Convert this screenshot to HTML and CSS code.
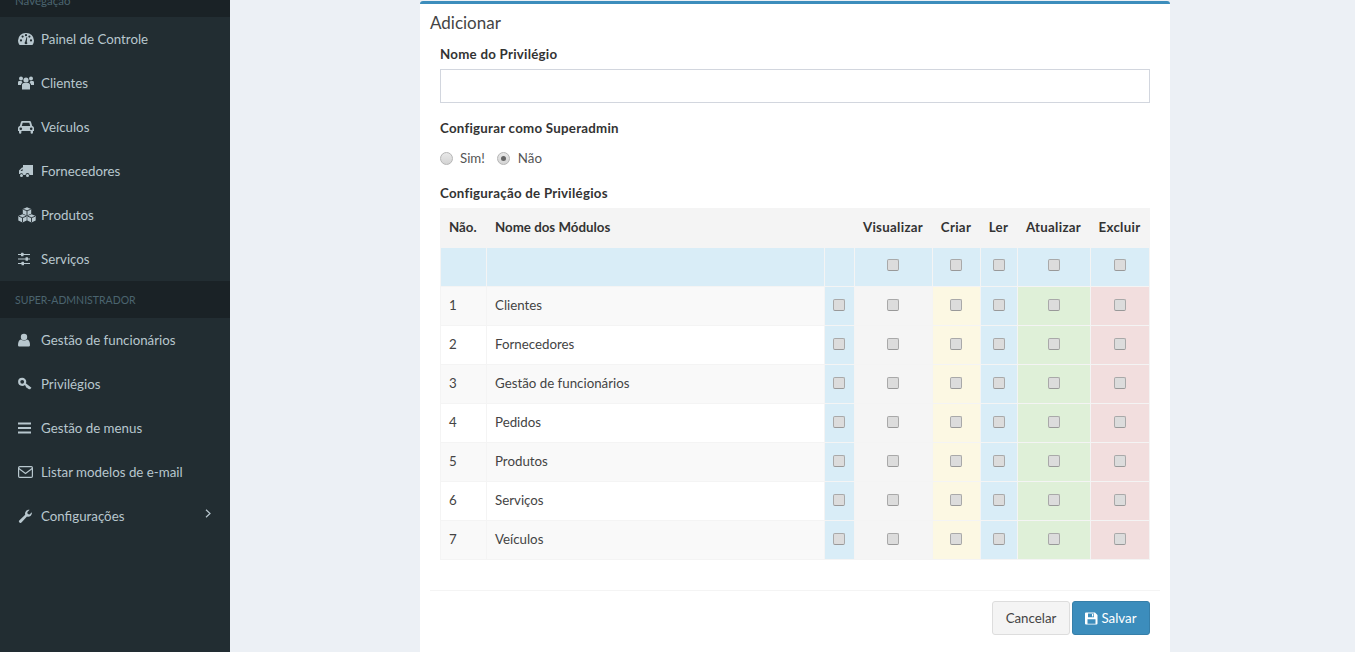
FILE: index.html
```html
<!DOCTYPE html>
<html lang="pt-BR">
<head>
  <meta charset="UTF-8">
  <meta name="viewport" content="width=device-width, initial-scale=1.0">
  <title>Adicionar Privilégio</title>
  <link rel="stylesheet" href="styles.css">
</head>
<body>
  <div class="wrapper">
    <aside class="sidebar">
      <div class="side-header side-header-top"><span>Navegação</span></div>
      <a class="side-item"><span class="side-icon"><svg width="16" height="14" viewBox="0 0 16 14"><path fill-rule="evenodd" d="M8 1a7.600 7.600 0 0 0-8 7.600c0 1.500.4 2.800 1.100 4a1 1 0 0 0 .9.4h12a1 1 0 0 0 .9-.4c.7-1.200 1.100-2.500 1.100-4A7.600 7.600 0 0 0 8 1zM3 9.500a1.100 1.100 0 1 1 0-2.200 1.100 1.100 0 0 1 0 2.200zM4.600 5.700a1.100 1.100 0 1 1 0-2.200 1.100 1.100 0 0 1 0 2.200zM8 4.300a1.100 1.100 0 1 1 0-2.200 1.100 1.100 0 0 1 0 2.200zM13 9.500a1.100 1.100 0 1 1 0-2.200 1.100 1.100 0 0 1 0 2.200zM11.400 5.700a1.100 1.100 0 1 1 0-2.200 1.100 1.100 0 0 1 0 2.200zM9.300 11.500a1.500 1.500 0 0 1-2.600 0c-.3-.6-.1-1.200.4-1.600L8.600 5l.6.200-.4 5c.5.300.8.800.5 1.300z"/></svg></span>Painel de Controle</a>
      <a class="side-item"><span class="side-icon"><svg width="16" height="14" viewBox="0 0 16 14"><circle cx="3" cy="2.500" r="2"/><circle cx="13" cy="2.500" r="2"/><circle cx="8" cy="4" r="2.600"/><path d="M0 9V6.500C0 5.700.5 5 1.200 5h2.300c.3.600.6 1 1 1.400C3.500 7 3 8 3 9H0zM16 9V6.500c0-.8-.5-1.500-1.200-1.500h-2.300c-.3.600-.6 1-1 1.400 1 .6 1.500 1.600 1.500 2.600h3zM4 13.500V9c0-1 .7-2 1.700-2h4.600c1 0 1.700 1 1.700 2v4.500z"/></svg></span>Clientes</a>
      <a class="side-item"><span class="side-icon"><svg width="16" height="14" viewBox="0 0 16 14"><path fill-rule="evenodd" d="M4.500 1h7c.8 0 1.400.5 1.600 1.200L14.200 6c1 .3 1.800 1.100 1.800 2.200v2.800h-1v1.500a1.200 1.200 0 0 1-2.400 0V11H3.400v1.500a1.200 1.200 0 0 1-2.400 0V11H0V8.200C0 7.100.8 6.300 1.800 6l1.100-3.800C3.100 1.500 3.700 1 4.500 1zM4.700 2.800 3.800 6h8.400l-.9-3.200zM2.800 7.400a1.300 1.300 0 1 0 0 2.600 1.300 1.300 0 0 0 0-2.600zM13.200 7.400a1.300 1.300 0 1 0 0 2.600 1.300 1.300 0 0 0 0-2.600z"/></svg></span>Veículos</a>
      <a class="side-item"><span class="side-icon"><svg width="16" height="14" viewBox="0 0 16 14"><path fill-rule="evenodd" d="M5 1h10v10h-3.500a2 2 0 0 0-4 0H5.300a2 2 0 0 0-3.600-1H1V6.500L4 3.500H5zM4.500 4.800 2.500 7h2z"/><circle cx="3.500" cy="11.500" r="1.500"/><circle cx="9.500" cy="11.500" r="1.500"/></svg></span>Fornecedores</a>
      <a class="side-item"><span class="side-icon"><svg class="side-cubes" width="18" height="16" viewBox="0 0 18 16"><path d="M9 .3l4.200 1.700v4.700L9 8.600 4.800 6.700V2zM4.500 7.200l4.200 1.700v4.700l-4.200 1.900L.3 13.600V8.900zM13.500 7.200l4.200 1.700v4.700l-4.200 1.900-4.200-1.900V8.900z"/><path class="cube-line" d="M5.200 2.300 9 3.800l3.800-1.500M9 3.800v4.600M.7 9.200l3.800 1.500 3.800-1.500M4.500 10.700v4.600M9.700 9.200l3.800 1.500 3.800-1.500M13.500 10.700v4.600"/></svg></span>Produtos</a>
      <a class="side-item"><span class="side-icon"><svg width="13" height="14" viewBox="0 0 13 14"><path d="M0 2h12v1H0zM0 6.500h12v1H0zM0 11h12v1H0z"/><rect x="3" y=".7" width="2.500" height="3.500" rx=".5"/><rect x="7.500" y="5.200" width="2.500" height="3.500" rx=".5"/><rect x="3.500" y="9.700" width="2.500" height="3.500" rx=".5"/></svg></span>Serviços</a>
      <div class="side-header"><span>SUPER-ADMNISTRADOR</span></div>
      <a class="side-item"><span class="side-icon"><svg width="12" height="14" viewBox="0 0 12 14"><circle cx="6" cy="4" r="3.200"/><path d="M0 12c0-3 1-5.200 3-5.600C3.800 7 4.800 7.500 6 7.500S8.200 7 9 6.400c2 .4 3 2.600 3 5.600 0 1-.7 1.500-1.500 1.500h-9C.7 13.500 0 13 0 12z"/></svg></span>Gestão de funcionários</a>
      <a class="side-item"><span class="side-icon"><svg class="side-key" width="14" height="14" viewBox="0 0 14 14"><circle cx="4.200" cy="4.800" r="3"/><path d="M6.500 6.700 12.800 11.500M9.600 9 8.400 10.500M11.400 10.400 10.400 11.900"/></svg></span>Privilégios</a>
      <a class="side-item"><span class="side-icon"><svg width="13" height="12" viewBox="0 0 13 12"><path d="M0 .5h13v2H0zM0 5h13v2H0zM0 9.500h13v2H0z"/></svg></span>Gestão de menus</a>
      <a class="side-item"><span class="side-icon"><svg class="side-outline" width="15" height="12" viewBox="0 0 15 12"><rect x=".6" y=".6" width="13.800" height="10.800" rx="1.200"/><path d="M.8 2.500 7.500 7.500 14.200 2.500"/></svg></span>Listar modelos de e-mail</a>
      <a class="side-item"><span class="side-icon"><svg width="14" height="14" viewBox="0 0 14 14"><path d="M13.800 3.200c.3 1.400-.2 2.800-1.300 3.700-1 .8-2.300 1-3.500.6l-5.300 5.700a1.500 1.500 0 1 1-2.200-2l5.700-5.400C6.800 4.600 7 3.300 7.900 2.200 8.800 1 10.200.5 11.600.8L9.300 3.200l.4 1.800 1.800.5z"/></svg></span>Configurações<svg class="side-arrow" width="7" height="9" viewBox="0 0 7 9"><path d="M1 .8 5 4.500 1 8.200"/></svg></a>
    </aside>

    <main class="content">
      <section class="box">
        <h3 class="box-title">Adicionar</h3>
        <div class="box-body">
          <label class="field-label" for="privilegeName">Nome do Privilégio</label>
          <input class="form-control" type="text" id="privilegeName">

          <div class="field-label label-super">Configurar como Superadmin</div>
          <div class="radio-row">
            <span class="radio-fake"></span><span class="radio-text">Sim!</span>
            <span class="radio-fake checked"></span><span class="radio-text">Não</span>
          </div>

          <div class="field-label label-config">Configuração de Privilégios</div>
          <table class="priv-table">
            <colgroup>
              <col class="col-no"><col class="col-name"><col class="col-all"><col class="col-view"><col class="col-create"><col class="col-read"><col class="col-update"><col class="col-delete">
            </colgroup>
            <thead>
              <tr><th>Não.</th><th>Nome dos Módulos</th><th></th><th>Visualizar</th><th>Criar</th><th>Ler</th><th>Atualizar</th><th>Excluir</th></tr>
            </thead>
            <tbody>
              <tr class="all-row"><td></td><td></td><td></td><td class="chk"><span class="check"></span></td><td class="chk"><span class="check"></span></td><td class="chk"><span class="check"></span></td><td class="chk"><span class="check"></span></td><td class="chk"><span class="check"></span></td></tr>
              <tr><td>1</td><td>Clientes</td><td class="chk info"><span class="check"></span></td><td class="chk active"><span class="check"></span></td><td class="chk warning"><span class="check"></span></td><td class="chk info"><span class="check"></span></td><td class="chk success"><span class="check"></span></td><td class="chk danger"><span class="check"></span></td></tr>
              <tr><td>2</td><td>Fornecedores</td><td class="chk info"><span class="check"></span></td><td class="chk active"><span class="check"></span></td><td class="chk warning"><span class="check"></span></td><td class="chk info"><span class="check"></span></td><td class="chk success"><span class="check"></span></td><td class="chk danger"><span class="check"></span></td></tr>
              <tr><td>3</td><td>Gestão de funcionários</td><td class="chk info"><span class="check"></span></td><td class="chk active"><span class="check"></span></td><td class="chk warning"><span class="check"></span></td><td class="chk info"><span class="check"></span></td><td class="chk success"><span class="check"></span></td><td class="chk danger"><span class="check"></span></td></tr>
              <tr><td>4</td><td>Pedidos</td><td class="chk info"><span class="check"></span></td><td class="chk active"><span class="check"></span></td><td class="chk warning"><span class="check"></span></td><td class="chk info"><span class="check"></span></td><td class="chk success"><span class="check"></span></td><td class="chk danger"><span class="check"></span></td></tr>
              <tr><td>5</td><td>Produtos</td><td class="chk info"><span class="check"></span></td><td class="chk active"><span class="check"></span></td><td class="chk warning"><span class="check"></span></td><td class="chk info"><span class="check"></span></td><td class="chk success"><span class="check"></span></td><td class="chk danger"><span class="check"></span></td></tr>
              <tr><td>6</td><td>Serviços</td><td class="chk info"><span class="check"></span></td><td class="chk active"><span class="check"></span></td><td class="chk warning"><span class="check"></span></td><td class="chk info"><span class="check"></span></td><td class="chk success"><span class="check"></span></td><td class="chk danger"><span class="check"></span></td></tr>
              <tr><td>7</td><td>Veículos</td><td class="chk info"><span class="check"></span></td><td class="chk active"><span class="check"></span></td><td class="chk warning"><span class="check"></span></td><td class="chk info"><span class="check"></span></td><td class="chk success"><span class="check"></span></td><td class="chk danger"><span class="check"></span></td></tr>
            </tbody>
          </table>
        </div>
        <div class="box-footer">
          <button class="btn btn-default" type="button">Cancelar</button>
          <button class="btn btn-primary" type="button"><svg width="13" height="13" viewBox="0 0 13 13"><path fill-rule="evenodd" d="M1 .5h9l2.500 2.500v8.500a1 1 0 0 1-1 1h-10.500a1 1 0 0 1-1-1V1.500a1 1 0 0 1 1-1zM3 1.500v3.700h6V1.500zM7 2h1.300v2.600H7zM2.500 7.300v4.400h8V7.300z"/></svg>Salvar</button>
        </div>
      </section>
    </main>
  </div>
</body>
</html>
```

FILE: styles.css
```css
html, body {
  height: 100%;
}

body {
  margin: 0;
  background-color: #ecf0f5;
  color: #333;
  font-family: Lato, "Noto Sans", Arial, sans-serif;
  font-size: 13.3px;
  overflow: hidden;
}

.wrapper {
  display: flex;
  height: 652px;
}

/* sidebar */
.sidebar {
  width: 230px;
  flex-shrink: 0;
  background-color: #222d32;
  color: #b8c7ce;
}

.side-header {
  display: flex;
  align-items: center;
  height: 37px;
  padding-left: 15px;
  background-color: #1a2226;
  color: #4b646f;
  font-size: 10.5px;
  box-sizing: border-box;
}

.side-header-top {
  height: 17px;
  align-items: flex-end;
  font-size: 11.5px;
  overflow: hidden;
}

.side-header-top span {
  margin-bottom: 10px;
}

.side-item {
  display: flex;
  align-items: center;
  height: 44px;
  padding-left: 18px;
  position: relative;
}

.side-icon {
  display: flex;
  align-items: center;
  width: 23px;
  flex-shrink: 0;
}

.side-icon svg {
  fill: #b8c7ce;
}

.side-icon .side-outline {
  fill: none;
  stroke: #b8c7ce;
  stroke-width: 1.2;
}

.side-icon .side-key {
  fill: none;
  stroke: #b8c7ce;
  stroke-width: 2.2;
}

.cube-line {
  fill: none;
  stroke: #222d32;
  stroke-width: .9;
}

.side-arrow {
  position: absolute;
  right: 18px;
  top: 15px;
  fill: none;
  stroke: #b8c7ce;
  stroke-width: 1.2;
}

/* main box */
.content {
  flex: 1;
  min-width: 0;
  padding: 1px 185px 0 190px;
}

.box {
  height: 651px;
  background-color: #fff;
  border-top: 3px solid #3c8dbc;
  border-radius: 3px 3px 0 0;
  box-sizing: border-box;
}

.box-title {
  margin: 0;
  padding: 9px 10px 0;
  font-size: 17px;
  font-weight: 400;
  line-height: 19px;
  color: #444;
}

.box-body {
  padding: 13px 20px 0;
}

.field-label {
  display: block;
  font-weight: 700;
  line-height: 18px;
  letter-spacing: .25px;
  color: #333;
}

.form-control {
  display: block;
  width: 100%;
  height: 34px;
  margin-top: 6px;
  border: 1px solid #d2d6de;
  box-sizing: border-box;
  background-color: #fff;
}

.label-super {
  margin-top: 16px;
}

.radio-row {
  display: flex;
  align-items: center;
  height: 18px;
  margin-top: 12px;
}

.radio-fake {
  width: 13px;
  height: 13px;
  border: 1px solid #b5b5b5;
  border-radius: 50%;
  background: linear-gradient(#e8e8e8, #d4d4d4);
  box-sizing: border-box;
  position: relative;
}

.radio-fake.checked::after {
  content: "";
  position: absolute;
  left: 3px;
  top: 3px;
  width: 5px;
  height: 5px;
  border-radius: 50%;
  background-color: #666;
}

.radio-text {
  margin: 0 12px 0 8px;
  color: #555;
}

.radio-fake:first-child + .radio-text {
  margin-left: 7px;
}

.label-config {
  margin-top: 17px;
}

/* table */
.priv-table {
  width: 710px;
  margin-top: 6px;
  border-collapse: collapse;
  table-layout: fixed;
  color: #444;
}

.col-no { width: 46px; }
.col-name { width: 338px; }
.col-all { width: 30px; }
.col-view { width: 78px; }
.col-create { width: 48px; }
.col-read { width: 37px; }
.col-update { width: 73px; }
.col-delete { width: 59px; }

.priv-table th,
.priv-table td {
  border: 1px solid #f4f4f4;
  padding: 0 8px 3px;
  height: 39px;
  box-sizing: border-box;
  white-space: nowrap;
}

.priv-table th {
  background-color: #f4f4f4;
  text-align: left;
  font-weight: 700;
  color: #333;
}

.priv-table th:nth-child(n+4) {
  text-align: center;
  padding: 0 1px 3px 0;
  letter-spacing: .3px;
}

.priv-table tbody tr:nth-child(even) td {
  background-color: #f9f9f9;
}

.priv-table .all-row td {
  background-color: #d9edf7;
}

.priv-table td.chk {
  padding: 0 1px 3px 0;
}

.priv-table .all-row td.chk {
  padding-bottom: 5px;
}

.priv-table tbody tr td.info { background-color: #d9edf7; }
.priv-table tbody tr td.active { background-color: #f5f5f5; }
.priv-table tbody tr td.warning { background-color: #fcf8e3; }
.priv-table tbody tr td.success { background-color: #dff0d8; }
.priv-table tbody tr td.danger { background-color: #f2dede; }

.check {
  display: block;
  width: 12px;
  height: 12px;
  margin: 0 auto;
  border: 1px solid #a9a9a9;
  border-bottom-color: #999;
  border-radius: 2px;
  background-color: #dcdcdc;
  box-sizing: border-box;
}

/* footer */
.box-footer {
  display: flex;
  justify-content: flex-end;
  gap: 2px;
  margin: 30px 10px 0;
  padding: 10px 10px 0;
  border-top: 1px solid #f4f4f4;
}

.btn {
  display: flex;
  align-items: center;
  justify-content: center;
  width: 78px;
  height: 34px;
  padding: 0;
  border: 1px solid;
  border-radius: 3px;
  font-family: inherit;
  font-size: 13.3px;
}

.btn-default {
  background-color: #f4f4f4;
  border-color: #ddd;
  color: #444;
}

.btn-primary {
  background-color: #3c8dbc;
  border-color: #367fa9;
  color: #fff;
}

.btn-primary svg {
  fill: #fff;
  margin-right: 3px;
}
```
